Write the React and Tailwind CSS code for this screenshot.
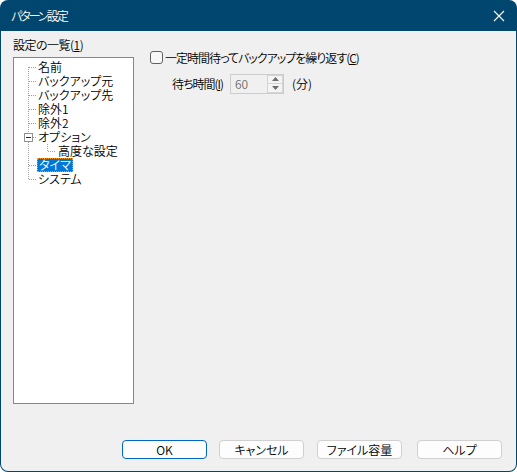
import React from "react";

const font = { fontFamily: "'Noto Sans CJK JP', 'Noto Sans', sans-serif" };

function TreeLines() {
  return (
    <svg className="absolute left-0 top-0" width="120" height="140" shapeRendering="crispEdges">
      <g stroke="#a0a0a0" strokeWidth="1" strokeDasharray="1 1" fill="none">
        <line x1="14.5" y1="9" x2="14.5" y2="75" />
        <line x1="14.5" y1="84" x2="14.5" y2="122" />
        {[9, 23, 37, 51, 65, 107, 121].map((y) => (
          <line key={y} x1="15" y1={y + 0.5} x2="23" y2={y + 0.5} />
        ))}
        <line x1="19" y1="79.5" x2="23" y2="79.5" />
        <line x1="33.5" y1="86" x2="33.5" y2="94" />
        <line x1="34" y1="93.5" x2="42" y2="93.5" />
      </g>
      <rect x="10.5" y="75.5" width="8" height="8" fill="#fff" stroke="#919191" />
      <line x1="12" y1="79.5" x2="17" y2="79.5" stroke="#1c2e6e" />
    </svg>
  );
}

function TreeRow({ children, indent = false, selected = false }) {
  return (
    <div className={`h-[14px] flex items-center ${indent ? "pl-[43px]" : "pl-[23px]"}`}>
      {selected ? (
        <span className="h-[14px] leading-[12px] px-[1px] bg-[#0078d7] text-white border border-dotted border-[#ff9a1f]">
          {children}
        </span>
      ) : (
        <span className="leading-[14px] pl-[1px]">{children}</span>
      )}
    </div>
  );
}

function Button({ children, primary = false, className = "" }) {
  return (
    <div
      className={`w-[85px] h-[19px] flex items-center justify-center rounded-[4px] bg-[#fdfdfd] text-[12px] leading-none text-black ${
        primary ? "border-[1.5px] border-[#0067c0]" : "border border-[#d0d0d0]"
      } ${className}`}
    >
      {children}
    </div>
  );
}

export default function App() {
  return (
    <div
      className="w-[517px] h-[472px] bg-[#00466e] rounded-[8px] overflow-hidden flex flex-col px-[1px] pb-[1px] text-black font-[350] [font-feature-settings:'palt']"
      style={font}
    >
      {/* title bar */}
      <div className="h-[31px] flex items-center justify-between pl-[10px] pr-[10px] text-white text-[12px]">
        <span className="tracking-[-2px]">パターン設定</span>
        <svg width="12" height="12" viewBox="0 0 12 12" className="mr-[1px]">
          <path d="M1 1 L11 11 M11 1 L1 11" stroke="#ffffff" strokeWidth="1.1" />
        </svg>
      </div>
      {/* body */}
      <div className="flex-1 bg-[#f0f0f0] rounded-b-[7px] flex flex-col text-[12px]">
        <div className="flex pl-[12px] pt-[5px]">
          <div className="flex flex-col">
            <div className="h-[18px] leading-[18px] tracking-[-0.5px]">
              設定の一覧(<span className="underline">1</span>)
            </div>
            <div className="mt-[3px] w-[121px] h-[347px] bg-white border border-[#828790] relative pt-[2px]">
              <TreeLines />
              <div className="relative">
                <TreeRow>名前</TreeRow>
                <TreeRow>バックアップ元</TreeRow>
                <TreeRow>バックアップ先</TreeRow>
                <TreeRow>除外1</TreeRow>
                <TreeRow>除外2</TreeRow>
                <TreeRow>オプション</TreeRow>
                <TreeRow indent>高度な設定</TreeRow>
                <TreeRow selected>タイマ</TreeRow>
                <TreeRow>システム</TreeRow>
              </div>
            </div>
          </div>
          <div className="flex flex-col pl-[16px] pt-[12px]">
            <div className="h-[19px] flex items-center">
              <div className="w-[13px] h-[13px] rounded-[3px] border border-[#616161] bg-[#f7f7f7]" />
              <span className="ml-[2px] tracking-[-1px]">
                一定時間待ってバックアップを繰り返す(<span className="underline">C</span>)
              </span>
            </div>
            <div className="mt-[7px] h-[19px] flex items-center pl-[22px]">
              <span className="tracking-[-1px]">
                待ち時間(<span className="underline">I</span>)
              </span>
              <div className="ml-[7px] flex h-[20px] border border-[#cccccc]">
                <div className="w-[36px] flex items-center pl-[4px] text-[#6d6d6d] bg-[#f0f0f0]">60</div>
                <div className="w-[16px] flex flex-col">
                  <div className="flex-1 flex items-center justify-center border border-[#d4d4d4] bg-[#f4f4f4]">
                    <svg width="7" height="4" viewBox="0 0 7 4">
                      <path d="M0 4 L3.5 0 L7 4 Z" fill="#6f6f6f" />
                    </svg>
                  </div>
                  <div className="flex-1 flex items-center justify-center border border-t-0 border-[#d4d4d4] bg-[#f4f4f4]">
                    <svg width="7" height="4" viewBox="0 0 7 4">
                      <path d="M0 0 L7 0 L3.5 4 Z" fill="#6f6f6f" />
                    </svg>
                  </div>
                </div>
              </div>
              <span className="ml-[8px]">(分)</span>
            </div>
          </div>
        </div>
        <div className="flex-1" />
        <div className="flex justify-end pr-[14px] pb-[12px]">
          <Button primary>OK</Button>
          <Button className="ml-[12px]">キャンセル</Button>
          <Button className="ml-[13px]">ファイル容量</Button>
          <Button className="ml-[15px]">ヘルプ</Button>
        </div>
      </div>
    </div>
  );
}
